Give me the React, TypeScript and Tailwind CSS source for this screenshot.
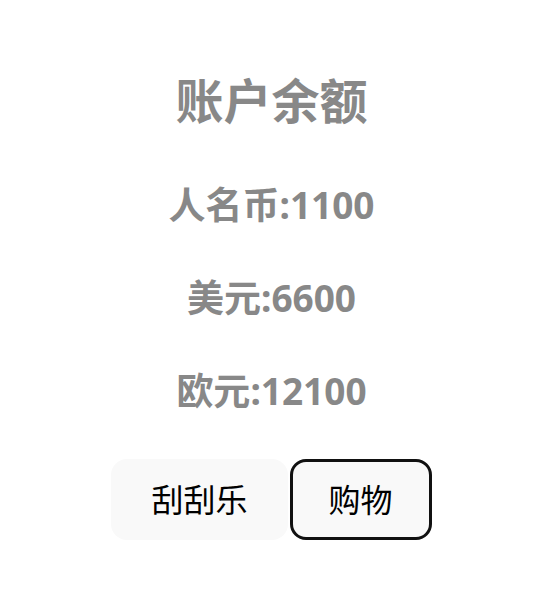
export default function App() {
  const balances = [
    { name: '人名币', amount: 1100 },
    { name: '美元', amount: 6600 },
    { name: '欧元', amount: 12100 },
  ]

  return (
    <div
      className="min-h-screen bg-white flex flex-col items-center pt-[65px] pr-[14px] text-[#888888]"
      style={{ fontFamily: '"Noto Sans", "Noto Sans CJK SC", sans-serif' }}
    >
      <h1 className="text-[48px] leading-[72px] font-bold">账户余额</h1>
      <div className="mt-[41px] flex flex-col items-center gap-[39px]">
        {balances.map((b) => (
          <h2 key={b.name} className="text-[37px] leading-[54px] font-bold">
            {b.name}:{b.amount}
          </h2>
        ))}
      </div>
      <div className="mt-[41px] flex gap-[2px]">
        <button className="h-[81px] px-[37px] rounded-[16px] bg-[#f9f9f9] border-[3px] border-transparent text-[32px] text-black">
          刮刮乐
        </button>
        <button className="h-[81px] px-[36px] rounded-[16px] bg-[#f9f9f9] border-[3px] border-[#111111] text-[32px] text-black">
          购物
        </button>
      </div>
    </div>
  )
}
